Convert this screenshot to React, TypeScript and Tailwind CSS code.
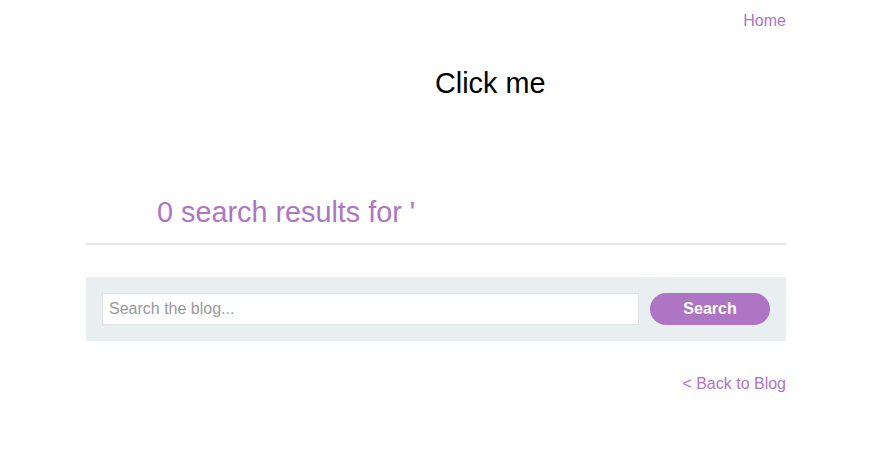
import React from 'react';

const purple = 'text-[#ae75c5]';

const App = () => {
  return (
    <div className="min-h-screen bg-white font-['Liberation_Sans',Arial,sans-serif]">
      <div className="w-[700px] ml-[86px]">
        {/* header */}
        <div className="pt-[12px] flex justify-end">
          <a href="#" className={`text-[16px] leading-[18px] ${purple}`}>
            Home
          </a>
        </div>

        {/* decoy */}
        <div className="mt-[37px] pl-[349px]">
          <div className="text-[28.8px] leading-[33px] text-black">Click me</div>
        </div>

        {/* results */}
        <div className="mt-[95px] border-b-2 border-[#e6e6e6] pb-[14px]">
          <h1 className={`pl-[71px] text-[28.8px] leading-[34px] font-normal ${purple}`}>
            0 search results for '
          </h1>
        </div>

        {/* search bar */}
        <form className="mt-[32px] bg-[#e9eef0] p-[16px] flex items-center gap-[11px]">
          <input
            type="text"
            placeholder="Search the blog..."
            className="flex-1 h-[32px] bg-white border border-[#e0e3e5] px-[6px] text-[16px] text-[#333] placeholder:text-[#999] outline-none"
          />
          <button
            type="submit"
            className="w-[120px] h-[32px] rounded-full bg-[#ae75c5] text-white font-bold text-[16px]"
          >
            Search
          </button>
        </form>

        {/* back */}
        <div className="mt-[34px] flex justify-end">
          <a href="#" className={`text-[16px] leading-[18px] ${purple}`}>
            &lt; Back to Blog
          </a>
        </div>
      </div>
    </div>
  );
};

export default App;
